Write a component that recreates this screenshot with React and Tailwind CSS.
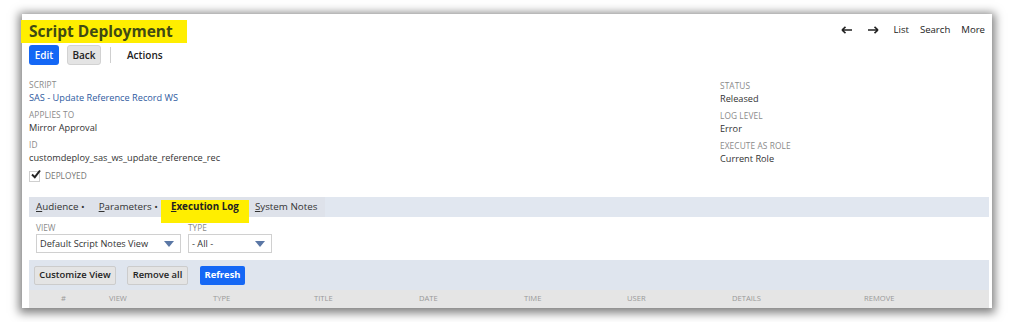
import React from "react";

function Field({ label, value, link }) {
  return (
    <div className="flex flex-col">
      <div className="h-[12px] leading-[12px] text-[8.3px] text-[#8a8a8a] uppercase tracking-[0.1px]">{label}</div>
      <div className={"h-[14px] leading-[14px] text-[9.2px] " + (link ? "text-[#2e5aa0]" : "text-[#333]")}>{value}</div>
    </div>
  );
}

function Select({ text, w }) {
  return (
    <div className={"h-[19px] border border-[#d0d0d0] bg-white flex items-center justify-between pl-[3px] pr-[6px] text-[9.2px] text-[#333] whitespace-nowrap " + w}>
      <span>{text}</span>
      <svg width="10" height="6" viewBox="0 0 10 6"><path d="M0 0H10L5 6Z" fill="#5a77a5" /></svg>
    </div>
  );
}

function Arrow({ dir }) {
  return (
    <svg width="11" height="8" viewBox="0 0 11 8">
      {dir === "left" ? (
        <path d="M1 4H11M1 4L4.5 0.8M1 4L4.5 7.2" stroke="#222" strokeWidth="1.6" fill="none" />
      ) : (
        <path d="M0 4H10M10 4L6.5 0.8M10 4L6.5 7.2" stroke="#222" strokeWidth="1.6" fill="none" />
      )}
    </svg>
  );
}

export default function App() {
  const cols = ["#", "VIEW", "TYPE", "TITLE", "DATE", "TIME", "USER", "DETAILS", "REMOVE"];
  return (
    <div className="w-[1017px] h-[322px] bg-white overflow-hidden font-['Open_Sans',sans-serif] pt-[14px] pl-[22px]">
      <div className="w-[970px] h-[294px] bg-white shadow-[0_2px_9px_3px_rgba(0,0,0,0.5)] flex flex-col pl-[7px] pr-[3px]">
        {/* header */}
        <div className="flex items-start justify-between pt-[6px]">
          <div className="-ml-[8px] bg-[#ffee00] h-[23px] w-[166px] flex items-center pl-[8px]">
            <span className="text-[15.5px] font-bold text-[#3f4a14] leading-none">Script Deployment</span>
          </div>
          <div className="flex items-center h-[20px] pr-[4px] text-[9.6px] text-[#222]">
            <Arrow dir="left" />
            <span className="ml-[16px]"><Arrow dir="right" /></span>
            <span className="ml-[14px]">List</span>
            <span className="ml-[11px]">Search</span>
            <span className="ml-[11px]">More</span>
          </div>
        </div>
        {/* buttons */}
        <div className="flex items-center mt-[2px] h-[20px]">
          <div className="h-[20px] w-[30px] bg-[#1467f5] rounded-[3px] text-white font-semibold text-[10px] flex items-center justify-center">Edit</div>
          <div className="h-[20px] w-[34px] ml-[8px] bg-[#e4e4e4] border border-[#d2d2d2] rounded-[3px] text-[#222] font-semibold text-[10px] flex items-center justify-center">Back</div>
          <div className="w-px h-[16px] bg-[#cfcfcf] ml-[9px]"></div>
          <div className="ml-[16px] text-[10px] font-semibold text-[#222]">Actions</div>
        </div>
        {/* fields */}
        <div className="flex mt-[14px]">
          <div className="w-[691px] flex flex-col gap-[4px]">
            <Field label="Script" value="SAS - Update Reference Record WS" link />
            <Field label="Applies To" value="Mirror Approval" />
            <Field label="ID" value="customdeploy_sas_ws_update_reference_rec" />
          </div>
          <div className="flex flex-col gap-[4px] pt-[1px]">
            <Field label="Status" value="Released" />
            <Field label="Log Level" value="Error" />
            <Field label="Execute as Role" value="Current Role" />
          </div>
        </div>
        <div className="flex items-center h-[14px] mt-[3px]">
          <div className="relative w-[11px] h-[11px] border border-[#cfcfcf] bg-white">
            <svg className="absolute -top-[3px] left-[1px]" width="10" height="10" viewBox="0 0 10 10"><path d="M1 5.5L3.8 8.2L9 1.5" stroke="#222" strokeWidth="2" fill="none" /></svg>
          </div>
          <span className="ml-[5px] text-[8.3px] text-[#777] uppercase">Deployed</span>
        </div>
        {/* tabs */}
        <div className="mt-[14px] flex flex-col">
          <div className="h-[20px] bg-[#e1e7f0] flex items-stretch">
            <div className="flex items-center bg-[#dee2ea] w-[296px] text-[9.8px] text-[#333] whitespace-nowrap">
              <span className="ml-[7px]"><u>A</u>udience •</span>
              <span className="ml-[14px]"><u>P</u>arameters •</span>
              <span className="ml-[3px] relative z-10 self-start mt-[3px] h-[23px] pb-[8px] bg-[#ffee00] w-[88px] flex items-center justify-center font-bold text-[#222]"><span><u>E</u>xecution Log</span></span>
              <span className="ml-[6px]"><u>S</u>ystem Notes</span>
            </div>
          </div>
          <div className="h-[43px] bg-white flex gap-[7px] pl-[7px] pt-[4px]">
            <div className="flex flex-col">
              <div className="h-[13px] leading-[13px] text-[8.3px] text-[#8a8a8a]">VIEW</div>
              <Select text="Default Script Notes View" w="w-[145px]" />
            </div>
            <div className="flex flex-col">
              <div className="h-[13px] leading-[13px] text-[8.3px] text-[#8a8a8a]">TYPE</div>
              <Select text="- All -" w="w-[84px]" />
            </div>
          </div>
          <div className="h-[30px] bg-[#dfe5ee] flex items-center pl-[5px]">
            <div className="h-[19px] w-[82px] bg-[#e4e4e4] border border-[#cccccc] rounded-[2px] text-[9.4px] font-semibold text-[#222] flex items-center justify-center whitespace-nowrap">Customize View</div>
            <div className="h-[19px] ml-[11px] w-[61px] bg-[#e4e4e4] border border-[#cccccc] rounded-[2px] text-[9.4px] font-semibold text-[#222] flex items-center justify-center whitespace-nowrap">Remove all</div>
            <div className="h-[19px] ml-[12px] w-[45px] bg-[#1467f5] rounded-[2px] text-[9.4px] font-bold text-white flex items-center justify-center">Refresh</div>
          </div>
          <div className="h-[18px] bg-[#e5e5e5] grid grid-cols-[80px_104px_101px_105px_105px_103px_105px_132px_1fr] items-center text-[7.6px] text-[#999]">
            {cols.map((c, i) => (
              <div key={c} className={i === 0 ? "pl-[32px]" : ""}>{c}</div>
            ))}
          </div>
        </div>
      </div>
    </div>
  );
}
